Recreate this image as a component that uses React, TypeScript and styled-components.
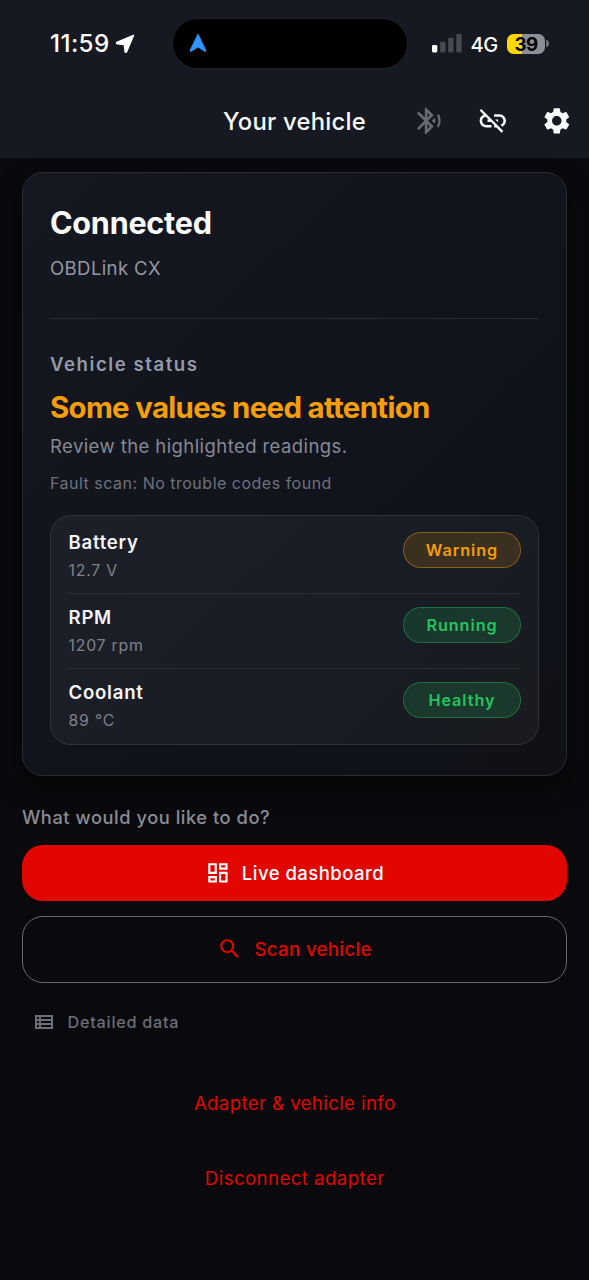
import React from 'react';
import styled, { createGlobalStyle } from 'styled-components';
import {
  MdBluetoothAudio,
  MdLinkOff,
  MdOutlineDashboard,
  MdOutlineViewList,
  MdSearch,
  MdSettings,
} from 'react-icons/md';

const GlobalStyle = createGlobalStyle`
  * { box-sizing: border-box; }
  html, body { margin: 0; background: #0a0a0e; }
  body { font-family: Inter, 'Liberation Sans', sans-serif; }
  svg { display: block; flex: none; }
`;

const Screen = styled.div`
  width: 589px;
  height: 1280px;
  overflow: hidden;
  background: #0a0a0e;
`;

const Header = styled.header`
  height: 158px;
  background: #161922;
`;

const StatusBar = styled.div`
  height: 86px;
  padding: 2px 40px 0 50px;
  display: grid;
  grid-template-columns: 123px 234px 1fr;
  align-items: center;
`;

const Clock = styled.div`
  display: flex;
  align-items: center;
  gap: 5.2px;
  color: #fff;
  font-size: 24.2px;
  font-weight: 500;
  line-height: 30px;
  letter-spacing: 0.4px;
`;

const Island = styled.div`
  height: 49px;
  margin-bottom: 1px;
  border-radius: 24.5px;
  background: #000;
  box-shadow: 0 0 0 1px #1e1f27;
  display: flex;
  align-items: center;
  padding: 0 0 2px 16px;
`;

const StatusRight = styled.div`
  display: flex;
  align-items: center;
  padding-left: 25px;
`;

const Network = styled.span`
  margin-left: 8.5px;
  width: 36.5px;
  padding-top: 1px;
  color: #fff;
  font-size: 20px;
  font-weight: 500;
  line-height: 24px;
  letter-spacing: -0.3px;
`;

const Battery = styled.div`
  width: 38px;
  height: 20px;
  margin-top: -1px;
  border-radius: 6.5px;
  background: linear-gradient(to right, #ffd60a 39%, #8e8f94 39%);
  color: #000;
  font-size: 18.8px;
  font-weight: 700;
  line-height: 21px;
  letter-spacing: -0.6px;
  text-align: center;
`;

const BatteryCap = styled.div`
  width: 2.5px;
  height: 7px;
  margin: -1px 0 0 1px;
  border-radius: 0 3px 3px 0;
  background: #6f7076;
`;

const AppBar = styled.div`
  height: 70px;
  padding: 0 16.5px;
  display: grid;
  grid-template-columns: 1fr auto 1fr;
  align-items: center;
`;

const Title = styled.h1`
  grid-column: 2;
  margin: 0;
  padding-top: 1px;
  color: #f7f8fb;
  font-size: 23.8px;
  font-weight: 500;
  line-height: 30px;
  letter-spacing: 0.25px;
`;

const Actions = styled.div`
  display: flex;
  justify-content: flex-end;
  gap: 32.5px;
`;

const ActionIcon = styled.span<{ $dim?: boolean }>`
  color: ${(p) => (p.$dim ? '#696b73' : '#f8fafc')};
  font-size: 31.6px;
`;

const Content = styled.main`
  padding: 14px 22px 0;
`;

const Card = styled.section`
  height: 604px;
  padding: 32px 27px 30px;
  border: 1px solid #292b32;
  border-radius: 21px;
  background: linear-gradient(135deg, #151821 0%, #11141d 50%, #0e121b 72%, #101115 100%);
  box-shadow: 0 12px 24px rgba(0, 0, 0, 0.6);
`;

const Line = styled.p<{
  $size: number;
  $height: number;
  $top?: number;
  $weight?: number;
  $spacing: number;
  $color: string;
}>`
  margin: ${(p) => p.$top ?? 0}px 0 0;
  color: ${(p) => p.$color};
  font-size: ${(p) => p.$size}px;
  font-weight: ${(p) => p.$weight ?? 400};
  line-height: ${(p) => p.$height}px;
  letter-spacing: ${(p) => p.$spacing}px;
  white-space: nowrap;
`;

const Divider = styled.hr`
  height: 1px;
  margin: 38px 0 33px;
  border: 0;
  background: #2a2c33;
`;

const Readings = styled.ul`
  list-style: none;
  margin: 21px 0 0;
  padding: 2px 18px 1px 17px;
  border: 1px solid rgba(255, 255, 255, 0.09);
  border-radius: 21px;
  background: rgba(255, 255, 255, 0.045);
`;

const Reading = styled.li`
  height: 75px;
  padding-top: 11px;
  display: flex;
  justify-content: space-between;
  align-items: flex-start;
  border-top: 1px solid rgba(255, 255, 255, 0.07);

  &:first-child {
    border-top-color: transparent;
  }
`;

const ReadingName = styled.div`
  padding-left: 0.5px;
  color: #f4f5f9;
  font-size: 18.6px;
  font-weight: 600;
  line-height: 25px;
  letter-spacing: 0.75px;
`;

const ReadingValue = styled.div`
  margin-top: 5px;
  padding-left: 0.5px;
  color: #7f8189;
  font-size: 15.8px;
  line-height: 21px;
  letter-spacing: 0.8px;
`;

type Tone = 'warning' | 'good';
const tones: Record<Tone, { text: string; edge: string; fill: string }> = {
  warning: { text: '#f59e0b', edge: 'rgba(245, 158, 11, 0.5)', fill: 'rgba(245, 158, 11, 0.16)' },
  good: { text: '#22c55e', edge: 'rgba(34, 197, 94, 0.5)', fill: 'rgba(34, 197, 94, 0.17)' },
};

const Pill = styled.span<{ $tone: Tone }>`
  width: 118px;
  height: 36px;
  margin: 2px -1px 0 0;
  border: 1.5px solid ${(p) => tones[p.$tone].edge};
  border-radius: 18px;
  background: ${(p) => tones[p.$tone].fill};
  background-clip: padding-box;
  color: ${(p) => tones[p.$tone].text};
  display: flex;
  align-items: center;
  justify-content: center;
  font-size: 16.2px;
  font-weight: 600;
  letter-spacing: 0.95px;
`;

const Button = styled.button<{ $outlined?: boolean }>`
  width: 100%;
  height: ${(p) => (p.$outlined ? 67 : 56)}px;
  margin-top: ${(p) => (p.$outlined ? 15 : 16)}px;
  padding: ${(p) => (p.$outlined ? '0 0 1px' : '0')};
  display: flex;
  align-items: center;
  justify-content: center;
  gap: ${(p) => (p.$outlined ? 11.7 : 11.3)}px;
  border: ${(p) => (p.$outlined ? '1px solid #68686d' : '0')};
  border-radius: 21px;
  background: ${(p) => (p.$outlined ? 'transparent' : '#e10600')};
  color: ${(p) => (p.$outlined ? '#e10600' : '#fff')};
  font: 500 18.5px/24px Inter, 'Liberation Sans', sans-serif;
  letter-spacing: ${(p) => (p.$outlined ? 0.4 : 0.48)}px;
`;

const DetailLink = styled.div`
  margin-top: 27px;
  padding-left: 10.3px;
  display: flex;
  align-items: center;
  gap: 11.3px;
  color: #6b6e77;
  font-size: 16.2px;
  font-weight: 500;
  line-height: 24px;
  letter-spacing: 0.75px;
`;

const TextLink = styled.div<{ $top: number; $spacing: number }>`
  margin-top: ${(p) => p.$top}px;
  padding-left: 0.5px;
  color: #e10600;
  font-size: 18.5px;
  line-height: 24px;
  letter-spacing: ${(p) => p.$spacing}px;
  text-align: center;
`;

const readings: { name: string; value: string; status: string; tone: Tone }[] = [
  { name: 'Battery', value: '12.7 V', status: 'Warning', tone: 'warning' },
  { name: 'RPM', value: '1207 rpm', status: 'Running', tone: 'good' },
  { name: 'Coolant', value: '89 °C', status: 'Healthy', tone: 'good' },
];

const LocationArrow = () => (
  <svg width="20" height="20" viewBox="0 0 20 20">
    <path
      d="M18.4 1.4 1.8 8.4Q1.2 9.4 2.2 9.7L9.4 10.4 10.2 17.8Q10.7 18.8 11.5 17.8Z"
      fill="#fff"
      stroke="#fff"
      strokeWidth="1.6"
      strokeLinejoin="round"
    />
  </svg>
);

const NavigationArrow = () => (
  <svg width="18" height="20" viewBox="0 0 18 20">
    <path
      d="M9 1.6 1.3 17.6Q1.3 18.6 2.4 18L9 13.8 15.6 18Q16.7 18.6 16.7 17.6Z"
      fill="#2f95fb"
      stroke="#2f95fb"
      strokeWidth="1.2"
      strokeLinejoin="round"
    />
  </svg>
);

const Signal = () => (
  <svg width="30" height="20" viewBox="0 0 30 20">
    <rect x="0" y="11" width="5.3" height="7.4" rx="1.3" fill="#fff" />
    <rect x="8.1" y="7.8" width="5.3" height="10.6" rx="1.3" fill="#484a51" />
    <rect x="16.2" y="3.8" width="5.3" height="14.6" rx="1.3" fill="#484a51" />
    <rect x="24.3" y="0" width="5.3" height="18.4" rx="1.3" fill="#484a51" />
  </svg>
);

export default function App() {
  return (
    <Screen>
      <GlobalStyle />
      <Header>
        <StatusBar>
          <Clock>
            11:59
            <LocationArrow />
          </Clock>
          <Island>
            <NavigationArrow />
          </Island>
          <StatusRight>
            <Signal />
            <Network>4G</Network>
            <Battery>39</Battery>
            <BatteryCap />
          </StatusRight>
        </StatusBar>
        <AppBar>
          <Title>Your vehicle</Title>
          <Actions>
            <ActionIcon $dim><MdBluetoothAudio /></ActionIcon>
            <ActionIcon><MdLinkOff /></ActionIcon>
            <ActionIcon><MdSettings /></ActionIcon>
          </Actions>
        </AppBar>
      </Header>
      <Content>
        <Card>
          <Line as="h2" $size={30.6} $height={36} $weight={700} $spacing={-0.27} $color="#f8fafc">
            Connected
          </Line>
          <Line $size={18.6} $height={24} $top={15} $spacing={0.36} $color="#9497a1">
            OBDLink CX
          </Line>
          <Divider />
          <Line $size={18.6} $height={24} $weight={600} $spacing={1.55} $color="#949aa8">
            Vehicle status
          </Line>
          <Line as="h2" $size={29.4} $height={36} $top={14} $weight={700} $spacing={-0.67} $color="#f59e0b">
            Some values need attention
          </Line>
          <Line $size={18.5} $height={24} $top={8} $spacing={0.42} $color="#868993">
            Review the highlighted readings.
          </Line>
          <Line $size={16} $height={22} $top={14} $spacing={0.5} $color="#6e717a">
            Fault scan: No trouble codes found
          </Line>
          <Readings>
            {readings.map((r) => (
              <Reading key={r.name}>
                <div>
                  <ReadingName>{r.name}</ReadingName>
                  <ReadingValue>{r.value}</ReadingValue>
                </div>
                <Pill $tone={r.tone}>{r.status}</Pill>
              </Reading>
            ))}
          </Readings>
        </Card>
        <Line $size={18.3} $height={24} $top={29} $weight={500} $spacing={0.54} $color="#8a8c94">
          What would you like to do?
        </Line>
        <Button>
          <MdOutlineDashboard size={25.8} />
          Live dashboard
        </Button>
        <Button $outlined>
          <MdSearch size={25.7} />
          Scan vehicle
        </Button>
        <DetailLink>
          <MdOutlineViewList size={24} />
          Detailed data
        </DetailLink>
        <TextLink $top={57} $spacing={0.45}>Adapter &amp; vehicle info</TextLink>
        <TextLink $top={51} $spacing={0.5}>Disconnect adapter</TextLink>
      </Content>
    </Screen>
  );
}
